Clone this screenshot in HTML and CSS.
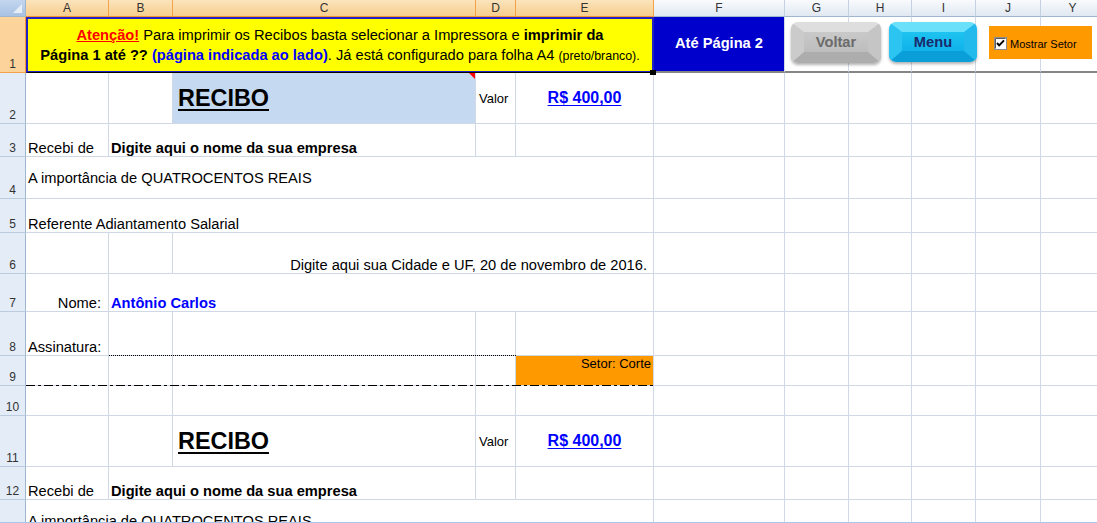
FILE: index.html
```html
<!DOCTYPE html>
<html lang="pt-BR">
<head>
<meta charset="utf-8">
<title>Recibos</title>
<link rel="stylesheet" href="styles.css">
</head>
<body>
<div class="sheet">
  <!-- column headers -->
  <div class="corner"></div>
  <div class="ch sel">A</div><div class="ch sel">B</div><div class="ch sel">C</div><div class="ch sel">D</div><div class="ch sel">E</div>
  <div class="ch">F</div><div class="ch">G</div><div class="ch">H</div><div class="ch">I</div><div class="ch">J</div><div class="ch">Y</div>

  <!-- row 1 -->
  <div class="rh sel">1</div>
  <div class="c note s5"><p><span class="warn">Atenção!</span> Para imprimir os Recibos basta selecionar a Impressora e <b>imprimir da</b><br><b>Página 1 até ??</b> <b class="blue">(página indicada ao lado)</b>. Já está configurado para folha A4 <small>(preto/branco).</small></p></div>
  <div class="c goto r1">Até Página 2</div>
  <div class="c r1"></div><div class="c r1"></div><div class="c r1"></div><div class="c r1"></div><div class="c r1"></div>

  <!-- row 2 -->
  <div class="rh">2</div>
  <div class="c"></div>
  <div class="c"></div>
  <div class="c hl mid title">RECIBO<span class="flag"></span></div>
  <div class="c mid sm valor">Valor</div>
  <div class="c mid center amount">R$ 400,00</div>
  <div class="c"></div><div class="c"></div><div class="c"></div><div class="c"></div><div class="c"></div><div class="c"></div>

  <!-- row 3 -->
  <div class="rh">3</div>
  <div class="c">Recebi de</div>
  <div class="c s2 bold">Digite aqui o nome da sua empresa</div>
  <div class="c"></div>
  <div class="c"></div>
  <div class="c"></div><div class="c"></div><div class="c"></div><div class="c"></div><div class="c"></div><div class="c"></div>

  <!-- row 4 -->
  <div class="rh">4</div>
  <div class="c s5 mid">A importância de QUATROCENTOS REAIS</div>
  <div class="c"></div><div class="c"></div><div class="c"></div><div class="c"></div><div class="c"></div><div class="c"></div>

  <!-- row 5 -->
  <div class="rh">5</div>
  <div class="c s5">Referente Adiantamento Salarial</div>
  <div class="c"></div><div class="c"></div><div class="c"></div><div class="c"></div><div class="c"></div><div class="c"></div>

  <!-- row 6 -->
  <div class="rh">6</div>
  <div class="c"></div>
  <div class="c"></div>
  <div class="c s3 right date">Digite aqui sua Cidade e UF, 20 de novembro de 2016.</div>
  <div class="c"></div><div class="c"></div><div class="c"></div><div class="c"></div><div class="c"></div><div class="c"></div>

  <!-- row 7 -->
  <div class="rh">7</div>
  <div class="c right label">Nome:</div>
  <div class="c s4 bold blue">Antônio Carlos</div>
  <div class="c"></div><div class="c"></div><div class="c"></div><div class="c"></div><div class="c"></div><div class="c"></div>

  <!-- row 8 -->
  <div class="rh">8</div>
  <div class="c">Assinatura:</div>
  <div class="c"></div><div class="c"></div><div class="c"></div><div class="c"></div>
  <div class="c"></div><div class="c"></div><div class="c"></div><div class="c"></div><div class="c"></div><div class="c"></div>

  <!-- row 9 -->
  <div class="rh">9</div>
  <div class="c"></div><div class="c"></div><div class="c"></div><div class="c"></div>
  <div class="c orange top right sm sector">Setor: Corte</div>
  <div class="c"></div><div class="c"></div><div class="c"></div><div class="c"></div><div class="c"></div><div class="c"></div>

  <!-- row 10 -->
  <div class="rh">10</div>
  <div class="c"></div><div class="c"></div><div class="c"></div><div class="c"></div><div class="c"></div>
  <div class="c"></div><div class="c"></div><div class="c"></div><div class="c"></div><div class="c"></div><div class="c"></div>

  <!-- row 11 -->
  <div class="rh">11</div>
  <div class="c"></div>
  <div class="c"></div>
  <div class="c mid title">RECIBO</div>
  <div class="c mid sm valor">Valor</div>
  <div class="c mid center amount">R$ 400,00</div>
  <div class="c"></div><div class="c"></div><div class="c"></div><div class="c"></div><div class="c"></div><div class="c"></div>

  <!-- row 12 -->
  <div class="rh">12</div>
  <div class="c">Recebi de</div>
  <div class="c s2 bold">Digite aqui o nome da sua empresa</div>
  <div class="c"></div>
  <div class="c"></div>
  <div class="c"></div><div class="c"></div><div class="c"></div><div class="c"></div><div class="c"></div><div class="c"></div>

  <!-- row 13 -->
  <div class="rh">13</div>
  <div class="c s5 mid">A importância de QUATROCENTOS REAIS</div>
  <div class="c"></div><div class="c"></div><div class="c"></div><div class="c"></div><div class="c"></div><div class="c"></div>

  <!-- borders drawn over cells -->
  <div class="sign-line"></div>
  <div class="cut-line"></div>
  <div class="fill-handle"></div>

  <!-- floating controls -->
  <div class="btn back">Voltar</div>
  <div class="btn menu">Menu</div>
  <div class="toggle">
    <svg class="cb" width="13" height="13" viewBox="0 0 13 13">
      <rect x="0.5" y="0.5" width="12" height="12" fill="#fff" stroke="#8c8c8c"/>
      <path d="M1.5 1.5 H11.5" stroke="#5a5a5a" stroke-width="1"/>
      <path d="M1.5 1.5 V11.5" stroke="#5a5a5a" stroke-width="1"/>
      <path d="M3 6 L5.2 8.4 L10 3.4" fill="none" stroke="#000" stroke-width="2"/>
    </svg>
    <span>Mostrar Setor</span>
  </div>
</div>
</body>
</html>
```

FILE: styles.css
```css
* { box-sizing: border-box; }

html, body {
  margin: 0;
  padding: 0;
  background: #fff;
}

body {
  width: 1097px;
  height: 523px;
  overflow: hidden;
  font-family: "Liberation Sans", Arial, sans-serif;
  color: #000;
}

.sheet {
  position: relative;
  width: 1097px;
  height: 523px;
  overflow: hidden;
  border-bottom: 1px solid #a9c6ea;
  display: grid;
  grid-template-columns: 26px 83px 64px 303px 40px 138px 131px 64px 63px 64px 65px 64px;
  grid-template-rows: 17px 56px 51px 33px 42px 34px 41px 38px 44px 30px 30px 51px 33px 42px;
}

/* headers */
.corner {
  position: relative;
  background: linear-gradient(#c3d6ee, #a8c2e4);
  border-right: 1px solid #9eb6ce;
  border-bottom: 1px solid #9eb6ce;
}
.corner::after {
  content: "";
  position: absolute;
  right: 3px;
  bottom: 3px;
  width: 9px;
  height: 9px;
  background: #e6eef8;
  clip-path: polygon(100% 0, 100% 100%, 0 100%);
}

.ch {
  display: flex;
  align-items: center;
  justify-content: center;
  font-size: 12px;
  color: #333;
  background: linear-gradient(#f9fbfd, #e0e8f2);
  border-right: 1px solid #c3d1e2;
  border-bottom: 1px solid #9eb6ce;
}
.ch.sel {
  background: linear-gradient(#fbe4bd, #f7cd8c);
  border-right-color: #f2a24a;
  border-bottom-color: #f29536;
}

.rh {
  display: flex;
  align-items: flex-end;
  justify-content: center;
  padding-bottom: 1px;
  font-size: 12px;
  line-height: 14px;
  color: #333;
  background: #e4ecf7;
  border-right: 1px solid #9eb6ce;
  border-bottom: 1px solid #bccbdf;
}
.rh.sel {
  background: #fcd49b;
  border-right-color: #f29536;
  border-bottom-color: #f2a24a;
}

/* cells */
.c {
  position: relative;
  display: flex;
  align-items: flex-end;
  min-width: 0;
  padding: 0 2px;
  font-size: 14.67px;
  white-space: nowrap;
  border-right: 1px solid #d0d7e5;
  border-bottom: 1px solid #d0d7e5;
}
.s2 { grid-column: span 2; }
.s3 { grid-column: span 3; }
.s4 { grid-column: span 4; }
.s5 { grid-column: span 5; }

.mid { align-items: center; }
.top { align-items: flex-start; }
.right { justify-content: flex-end; }
.center { justify-content: center; }
.bold { font-weight: bold; }
.blue { color: #0000ff; }
.sm { font-size: 13px; }

.r1 { border-bottom: 2px solid #858585; }

.note {
  grid-column: span 5;
  justify-content: center;
  align-items: center;
  background: #ffff00;
  border: 2px solid #2222c4;
  border-bottom: 1px solid #000;
  box-shadow: inset 0 -1px 0 #2222c4;
  padding: 0 4px;
}
.note p {
  margin: 0;
  text-align: center;
  line-height: 20px;
  font-size: 14.67px;
}
.note small { font-size: 12.4px; }
.warn {
  color: #ff0000;
  font-weight: bold;
  text-decoration: underline;
}

.goto {
  justify-content: center;
  align-items: center;
  background: #0000cc;
  color: #fff;
  font-weight: bold;
  padding-bottom: 2px;
}

.hl { background: #c5d9f1; }

.title {
  padding-left: 5px;
  font-size: 23.4px;
  font-weight: bold;
  text-decoration: underline;
  text-decoration-thickness: 2px;
  text-underline-offset: 3px;
}
.flag {
  position: absolute;
  top: 0;
  right: 0;
  width: 6px;
  height: 6px;
  background: #ff0000;
  clip-path: polygon(0 0, 100% 0, 100% 100%);
}

.valor { padding-left: 3px; }

.amount {
  font-size: 16px;
  font-weight: bold;
  color: #0000ff;
  text-decoration: underline;
  text-underline-offset: 2px;
}

.date { padding-right: 6px; }
.label { padding-right: 7px; }

.orange { background: #ff9900; }
.sector { padding-right: 2px; }

/* borders over cells */
.sign-line {
  position: absolute;
  grid-area: 9 / 3 / 10 / 6;
  left: 0;
  right: 0;
  bottom: 0;
  height: 1px;
  background: repeating-linear-gradient(90deg, #000 0 1px, transparent 1px 2px);
}
.cut-line {
  position: absolute;
  grid-area: 10 / 2 / 11 / 7;
  left: 0;
  right: 0;
  bottom: 0;
  height: 1px;
  background: repeating-linear-gradient(90deg, #000 0 9px, transparent 9px 12px, #000 12px 15px, transparent 15px 18px);
}
.fill-handle {
  position: absolute;
  left: 650px;
  top: 70px;
  width: 6px;
  height: 5px;
  background: #000;
}

/* floating controls */
.btn {
  position: absolute;
  top: 22px;
  height: 41px;
  display: flex;
  align-items: center;
  justify-content: center;
  font-size: 14.67px;
  font-weight: bold;
  border-radius: 7px;
  border-style: solid;
  border-width: 10px 13px 11px 13px;
  box-shadow: 0 2px 3px rgba(0, 0, 0, 0.3);
}
.back {
  left: 791px;
  width: 90px;
  color: #6b6b6b;
  background: linear-gradient(#c9c9c9, #bdbdbd);
  border-color: #dedede #c5c5c5 #adadad #cbcbcb;
}
.menu {
  left: 889px;
  width: 88px;
  height: 40px;
  color: #1a2a6c;
  background: linear-gradient(#1ec3f0, #10b2ea);
  border-color: #6ae0fa #22baed #0a9fd8 #2cc5f2;
}

.toggle {
  position: absolute;
  left: 989px;
  top: 26px;
  width: 103px;
  height: 33px;
  display: flex;
  align-items: center;
  gap: 3px;
  padding: 2px 0 0 5px;
  background: #ff9900;
  font-size: 11px;
  color: #000;
}
.cb { display: block; flex: none; }
```
